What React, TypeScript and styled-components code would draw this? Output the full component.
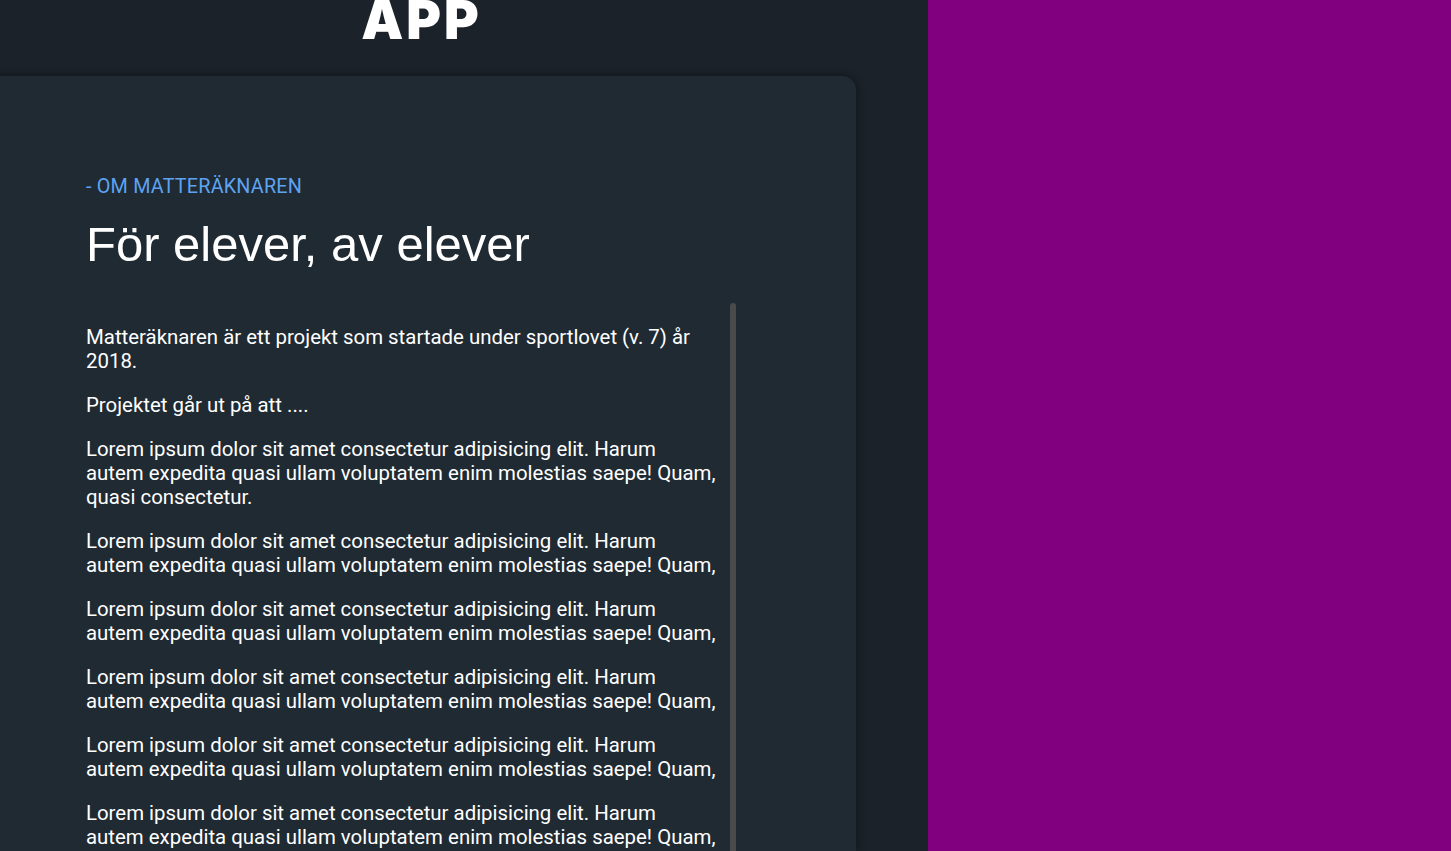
import React from "react";
import styled, { createGlobalStyle } from "styled-components";

const Global = createGlobalStyle`
  html, body { margin: 0; padding: 0; height: 100%; overflow: hidden; }
  body { background: #1b222a; }
  #root { height: 100%; }
`;

const Page = styled.div`
  display: flex;
  height: 851px;
  overflow: hidden;
`;

const LeftPane = styled.div`
  width: 928px;
  flex: none;
  background: #1b222a;
  padding-right: 72px;
  box-sizing: border-box;
  display: flex;
  flex-direction: column;
  overflow: hidden;
`;

const Column = styled.div`
  margin-left: -16px;
  display: flex;
  flex-direction: column;
  flex: 1;
  min-height: 0;
`;

const Header = styled.header`
  height: 76px;
  flex: none;
  display: flex;
  justify-content: center;
  align-items: flex-end;
  overflow: hidden;
`;

const Logo = styled.h1`
  margin: 0 0 29px;
  padding-left: 3px;
  font-family: Inter, "Liberation Sans", sans-serif;
  font-weight: 900;
  font-size: 53px;
  line-height: 1;
  color: #ffffff;
  letter-spacing: 3px;
`;

const Card = styled.section`
  flex: 1;
  min-height: 0;
  background: #1f2a33;
  border-radius: 14px 14px 0 0;
  box-shadow: 0 0 10px rgba(0, 0, 0, 0.45);
  padding: 99px 0 0 102px;
  display: flex;
  flex-direction: column;
  overflow: hidden;
`;

const Eyebrow = styled.div`
  font-family: Roboto, "Noto Sans", sans-serif;
  font-size: 19.8px;
  line-height: 24px;
  color: #5ea3f2;
  letter-spacing: 0.2px;
`;

const Title = styled.h2`
  margin: 18px 0 0;
  font-family: "Liberation Sans", Arial, sans-serif;
  font-weight: 400;
  font-size: 49px;
  line-height: 55px;
  color: #ffffff;
`;

const ScrollArea = styled.div`
  position: relative;
  margin-top: 31px;
  width: 650px;
  flex: 1;
  min-height: 0;
  overflow: hidden;
`;

const Content = styled.div`
  width: 630px;
  padding-top: 2px;
`;

const ScrollThumb = styled.div`
  position: absolute;
  top: 0;
  left: 644px;
  width: 6px;
  height: 620px;
  border-radius: 3px;
  background: #4a4a4a;
`;

const Para = styled.p`
  margin: 20px 0;
  font-family: Roboto, "Noto Sans", sans-serif;
  font-size: 20.4px;
  line-height: 24px;
  color: #ffffff;
`;

const Purple = styled.div`
  flex: 1;
  background: #800080;
`;

const lorem =
  "Lorem ipsum dolor sit amet consectetur adipisicing elit. Harum autem expedita quasi ullam voluptatem enim molestias saepe! Quam,";

export default function App() {
  return (
    <>
      <Global />
      <Page>
        <LeftPane>
          <Column>
            <Header>
              <Logo>APP</Logo>
            </Header>
            <Card>
              <Eyebrow>- OM MATTERÄKNAREN</Eyebrow>
              <Title>För elever, av elever</Title>
              <ScrollArea>
                <Content>
                  <Para>
                    Matteräknaren är ett projekt som startade under sportlovet (v. 7) år 2018.
                  </Para>
                  <Para>Projektet går ut på att ....</Para>
                  <Para>{lorem} quasi consectetur.</Para>
                  {[0, 1, 2, 3, 4, 5, 6, 7].map((i) => (
                    <Para key={i}>{lorem}</Para>
                  ))}
                </Content>
                <ScrollThumb />
              </ScrollArea>
            </Card>
          </Column>
        </LeftPane>
        <Purple />
      </Page>
    </>
  );
}
